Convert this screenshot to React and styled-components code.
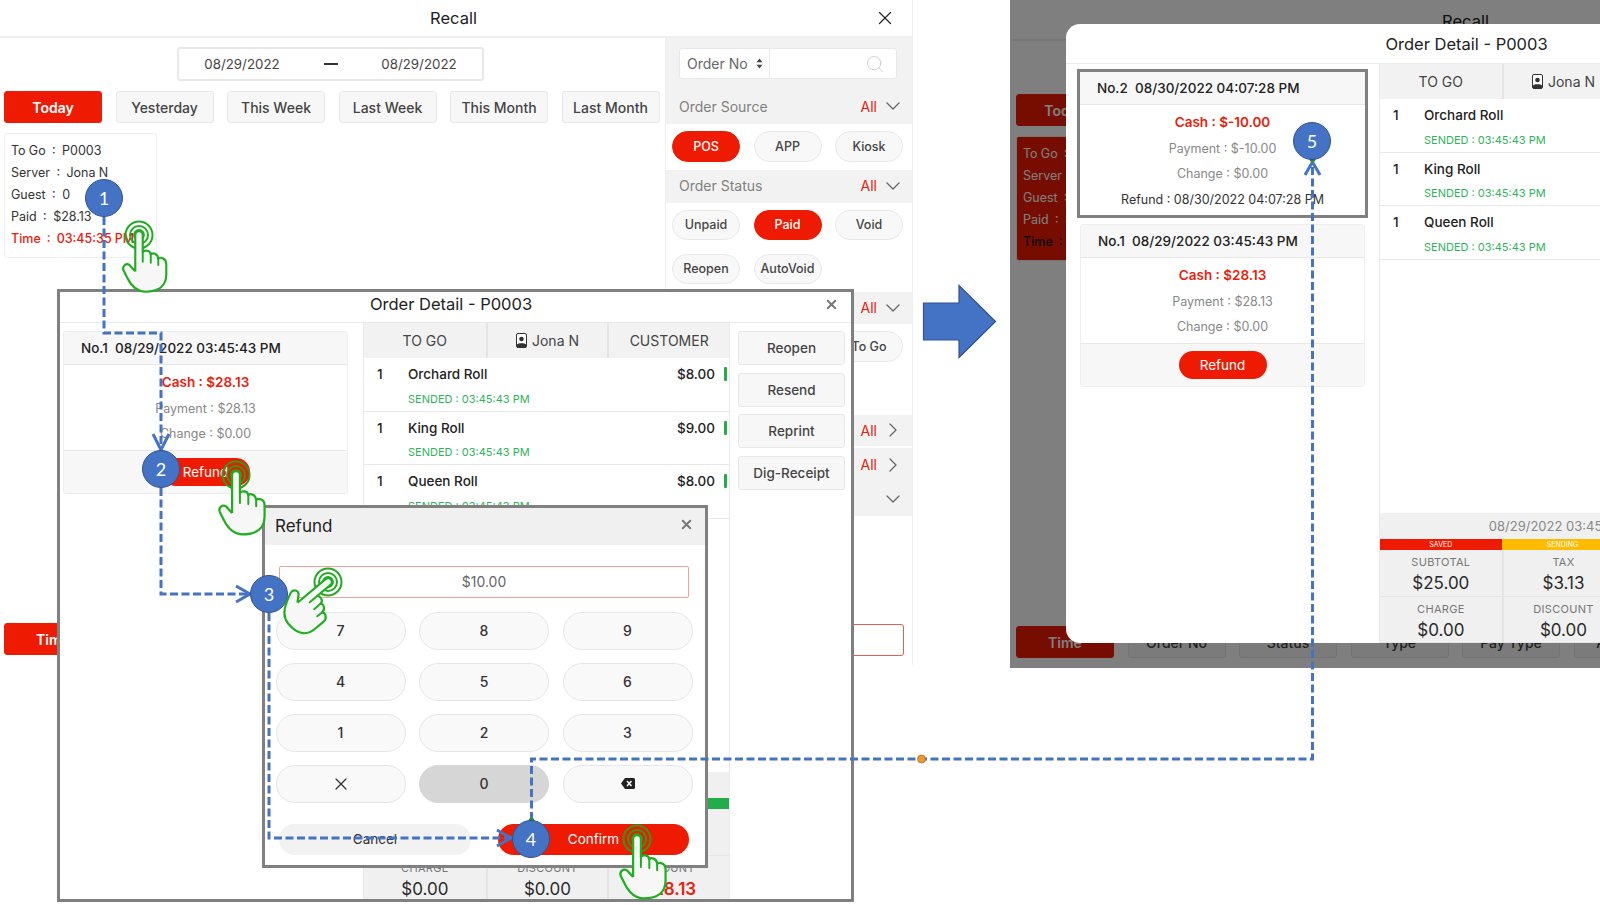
import React from 'react';
import styled, { createGlobalStyle } from 'styled-components';
import { ChevronDown, ChevronRight, Search, X } from 'lucide-react';

const RED = '#ee1b02';
const BLUE = '#4472c4';

const Global = createGlobalStyle`
  html, body { margin: 0; padding: 0; background: #fff; overflow: hidden; }
  * { box-sizing: border-box; }
  body { font-family: Inter, "Open Sans", "Liberation Sans", sans-serif; color: #333; }
`;

const Page = styled.div`
  position: relative;
  width: 1600px;
  height: 905px;
  overflow: hidden;
  background: #fff;
`;

/* ---------- Recall screen ---------- */
const RecallWrap = styled.div`
  width: 913px;
  height: 665px;
  display: flex;
  flex-direction: column;
  background: #fff;
  border-right: 1px solid #eee;
`;
const RecallHead = styled.header`
  flex: 0 0 38px;
  display: grid;
  grid-template-columns: 1fr auto 1fr;
  align-items: center;
  border-bottom: 2px solid #eee;
  padding: 0 16px 0 11px;
`;
const RecallTitle = styled.h1`
  grid-column: 2;
  margin: 0;
  font-size: 16.5px;
  font-weight: 400;
  color: #222;
`;
const RecallClose = styled.span`
  grid-column: 3;
  justify-self: end;
  display: flex;
  color: #222;
`;
const RecallBody = styled.div`
  flex: 1;
  display: grid;
  grid-template-columns: 665px 1fr;
  min-height: 0;
`;
const MainCol = styled.div`
  display: flex;
  flex-direction: column;
  padding: 9px 0 10px 4px;
`;
const DateBox = styled.div`
  align-self: center;
  margin-right: 8px;
  width: 307px;
  height: 34px;
  display: grid;
  grid-template-columns: 126px 51px 126px;
  align-items: center;
  justify-items: center;
  padding-bottom: 1px;
  border: 2px solid #e8e8e8;
  border-radius: 3px;
  font-size: 13.3px;
  color: #444;
`;
const DateDash = styled.span`
  width: 14px;
  height: 2px;
  background: #333;
`;
const RangeRow = styled.div`
  margin-top: 10px;
  display: flex;
  gap: 13.5px;
`;
const RangeBtn = styled.div`
  width: 98px;
  height: 32px;
  display: flex;
  align-items: center;
  justify-content: center;
  border-radius: 3px;
  font-size: 14px;
  font-weight: ${p => (p.$on ? 600 : 500)};
  color: ${p => (p.$on ? '#fff' : '#444')};
  background: ${p => (p.$on ? RED : '#f7f7f7')};
  border: 1px solid ${p => (p.$on ? RED : '#e8e8e8')};
`;
const OrderCard = styled.div`
  margin-top: 10px;
  width: 153px;
  height: 125px;
  padding: 6px 0 0 6px;
  border: 1px solid #eee;
  border-radius: 3px;
  font-size: 12.5px;
  line-height: 22px;
  word-spacing: -0.3px;
  white-space: nowrap;
  background: ${p => (p.$selected ? RED : '#fff')};
  color: ${p => (p.$selected ? '#fff' : '#333')};
`;
const CardTime = styled.div`
  color: ${p => (p.$selected ? '#111' : '#e8200c')};
  font-weight: 500;
`;
const BottomRow = styled(RangeRow)`
  margin-top: auto;
`;

const SideCol = styled.aside`
  border-left: 1px solid #eee;
  display: flex;
  flex-direction: column;
`;
const SearchBand = styled.div`
  height: 51px;
  padding: 10px 14px 0 13px;
  background: #f2f2f2;
`;
const SearchBox = styled.div`
  display: grid;
  grid-template-columns: 90px 1fr;
  height: 31px;
  width: 218px;
  background: #fff;
  border: 1px solid #e8e8e8;
  border-radius: 3px;
`;
const SelectCell = styled.div`
  display: flex;
  align-items: center;
  gap: 8px;
  padding-left: 7px;
  font-size: 14px;
  color: #666;
  border-right: 1px solid #e8e8e8;
`;
const SearchCell = styled.div`
  display: flex;
  align-items: center;
  justify-content: flex-end;
  padding-right: 11px;
  color: #ccc;
`;
const Band = styled.div`
  height: ${p => p.$h}px;
  display: flex;
  align-items: center;
  padding: 0 7px 1px 13px;
  background: #f2f2f2;
  font-size: 14px;
  color: #808080;
`;
const BandLabel = styled.span`
  flex: 1;
`;
const BandAll = styled.span`
  color: #e8200c;
  margin-right: 4px;
`;
const PillGrid = styled.div`
  display: grid;
  grid-template-columns: repeat(3, 68px);
  gap: 13.5px;
  padding: 7px 0 8px 6px;
  min-height: ${p => p.$min || 0}px;
`;
const Pill = styled.div`
  height: 30.5px;
  display: flex;
  align-items: center;
  justify-content: center;
  border-radius: 16px;
  font-size: 12.5px;
  font-weight: 500;
  color: ${p => (p.$on ? '#fff' : '#444')};
  background: ${p => (p.$on ? RED : '#f8f8f8')};
  border: 1px solid ${p => (p.$on ? RED : '#e8e8e8')};
`;
const SideInput = styled.div`
  margin: auto 8px 9px 8px;
  height: 32px;
  border: 1px solid #e8604c;
  border-radius: 3px;
`;
const BandGap = styled.div`
  height: 2px;
`;

const SortCaret = () => (
  <svg width="7" height="11" viewBox="0 0 7 11"><path d="M3.5 0.5L6.5 4.2H0.5Z M3.5 10.5L0.5 6.8H6.5Z" fill="#444" /></svg>
);

const FilterBand = ({ h, label, all = true, open = true }) => (
  <Band $h={h}>
    <BandLabel>{label}</BandLabel>
    {all && <BandAll>All</BandAll>}
    {open ? <ChevronDown size={24} strokeWidth={1.3} color="#666" /> : <ChevronRight size={24} strokeWidth={1.3} color="#666" />}
  </Band>
);

const RANGES = ['Yesterday', 'This Week', 'Last Week', 'This Month', 'Last Month'];
const SORTS = ['Order No', 'Status', 'Type', 'Pay Type', 'Amount'];

const RecallScreen = ({ selected }) => (
  <RecallWrap>
    <RecallHead>
      <RecallTitle>Recall</RecallTitle>
      <RecallClose><X size={22} strokeWidth={1.3} /></RecallClose>
    </RecallHead>
    <RecallBody>
      <MainCol>
        <DateBox><span>08/29/2022</span><DateDash /><span>08/29/2022</span></DateBox>
        <RangeRow>
          <RangeBtn $on>Today</RangeBtn>
          {RANGES.map(r => <RangeBtn key={r}>{r}</RangeBtn>)}
        </RangeRow>
        <OrderCard $selected={selected}>
          <div>To Go&nbsp; : &nbsp;P0003</div>
          <div>Server&nbsp; : &nbsp;Jona N</div>
          <div>Guest&nbsp; : &nbsp;0</div>
          <div>Paid&nbsp; : &nbsp;$28.13</div>
          <CardTime $selected={selected}>Time&nbsp; : &nbsp;03:45:35 PM</CardTime>
        </OrderCard>
        <BottomRow>
          <RangeBtn $on>Time</RangeBtn>
          {SORTS.map(r => <RangeBtn key={r}>{r}</RangeBtn>)}
        </BottomRow>
      </MainCol>
      <SideCol>
        <SearchBand>
          <SearchBox>
            <SelectCell>Order No <SortCaret /></SelectCell>
            <SearchCell><Search size={20} strokeWidth={1.1} /></SearchCell>
          </SearchBox>
        </SearchBand>
        <FilterBand h={35} label="Order Source" />
        <PillGrid>
          <Pill $on>POS</Pill><Pill>APP</Pill><Pill>Kiosk</Pill>
        </PillGrid>
        <FilterBand h={33} label="Order Status" />
        <PillGrid>
          <Pill>Unpaid</Pill><Pill $on>Paid</Pill><Pill>Void</Pill>
          <Pill>Reopen</Pill><Pill>AutoVoid</Pill>
        </PillGrid>
        <FilterBand h={32} label="Order Type" />
        <PillGrid $min={91}>
          <Pill>Dine In</Pill><Pill>Delivery</Pill><Pill>To Go</Pill>
        </PillGrid>
        <FilterBand h={31} label="Pay Type" open={false} />
        <BandGap />
        <FilterBand h={34} label="Server" open={false} />
        <FilterBand h={34} label="Amount" all={false} />
        <SideInput />
      </SideCol>
    </RecallBody>
  </RecallWrap>
);

/* ---------- Order detail ---------- */
const FramedDetail = styled.section`
  position: absolute;
  left: 57px;
  top: 289px;
  width: 797px;
  height: 613px;
  border: 3px solid #808080;
  background: #fff;
  display: flex;
  flex-direction: column;
  overflow: hidden;
`;
const ModalDetail = styled.section`
  position: absolute;
  left: 56px;
  top: 24px;
  width: 801px;
  height: 619px;
  border-radius: 14px 0 0 14px;
  background: #fff;
  display: flex;
  flex-direction: column;
  overflow: hidden;
`;
const DetailHead = styled.header`
  flex: 0 0 ${p => p.$h}px;
  display: grid;
  grid-template-columns: 1fr auto 1fr;
  align-items: center;
  border-bottom: 1px solid #eaeaea;
  padding: 0 ${p => p.$shift}px ${p => p.$lift}px 0;
`;
const DetailTitle = styled.h2`
  grid-column: 2;
  margin: 0;
  font-size: 16.5px;
  font-weight: 400;
  color: #222;
`;
const DetailClose = styled.span`
  grid-column: 3;
  justify-self: end;
  display: flex;
  margin-right: 3px;
  margin-top: 1px;
  color: #777;
`;
const DetailBody = styled.div`
  flex: 1;
  min-height: 0;
  display: grid;
  grid-template-columns: ${p => p.$left}px 366px 122px;
`;
const PayCol = styled.div`
  display: flex;
  flex-direction: column;
  gap: 9px;
  padding: 8px 0 0 ${p => p.$inset}px;
`;
const PayCard = styled.article`
  width: 285px;
  background: #fff;
  border-radius: ${p => (p.$marked ? 0 : 3)}px;
  outline: ${p => (p.$marked ? '3.5px solid #808080' : 'none')};
  border: ${p => (p.$marked ? '0' : '1px solid #eeeeee')};
`;
const PayHead = styled.div`
  height: 33px;
  display: flex;
  align-items: center;
  padding-left: 17px;
  background: #f7f7f7;
  border-bottom: 1px solid #e8e8e8;
  font-size: 13.5px;
  font-weight: 500;
  color: #222;
  white-space: pre;
`;
const PayLines = styled.div`
  padding: 5px 0 3px;
  text-align: center;
  line-height: 25.5px;
  font-size: 12.5px;
  white-space: nowrap;
  color: #888;
`;
const PayCash = styled.div`
  color: #e8200c;
  font-size: 13.5px;
  font-weight: 600;
`;
const PayRefund = styled.div`
  color: #333;
`;
const PayFoot = styled.div`
  height: 43px;
  display: flex;
  align-items: center;
  justify-content: center;
  background: #f7f7f7;
  border-top: 1px solid #e8e8e8;
`;
const RefundBtn = styled.div`
  width: 88px;
  height: 28px;
  display: flex;
  align-items: center;
  justify-content: center;
  border-radius: 14px;
  background: ${RED};
  color: #fff;
  font-size: 13.5px;
`;
const TicketCol = styled.div`
  display: flex;
  flex-direction: column;
  border-left: 1px solid #eaeaea;
  margin-bottom: -${p => p.$bleed}px;
  min-height: 0;
`;
const Tabs = styled.div`
  flex: 0 0 35px;
  display: grid;
  grid-template-columns: repeat(3, 1fr);
  background: #f2f2f2;
`;
const Tab = styled.div`
  display: flex;
  align-items: center;
  justify-content: center;
  gap: 5px;
  font-size: 14px;
  color: #444;
  & + & { border-left: 2px solid #e4e4e4; }
`;
const Items = styled.div`
  flex: 1;
  min-height: 0;
  overflow: hidden;
`;
const ItemRow = styled.div`
  height: 53.5px;
  display: grid;
  grid-template-columns: 31px 1fr auto 14px;
  grid-template-rows: 32.5px 1fr;
  padding-left: 13px;
  border-bottom: 1px solid #e8e8e8;
  align-items: center;
  font-size: 13.5px;
  font-weight: 500;
  color: #222;
`;
const Sended = styled.div`
  grid-column: 2 / 5;
  align-self: start;
  margin-top: 1px;
  font-size: 11px;
  font-weight: 400;
  color: #2fb35a;
`;
const ItemBar = styled.i`
  justify-self: end;
  margin-right: 2px;
  width: 3px;
  height: 14px;
  border-radius: 1px;
  background: #22ad4d;
`;
const Totals = styled.div`
  flex: 0 0 auto;
  background: #f0f0f0;
`;
const StampRow = styled.div`
  height: 26px;
  display: flex;
  align-items: center;
  justify-content: center;
  padding-left: 10px;
  font-size: 13px;
  color: #888;
`;
const StatusBar = styled.div`
  display: grid;
  grid-template-columns: repeat(3, 1fr);
  height: 11px;
`;
const StatusCell = styled.div`
  background: ${p => p.$c};
  color: #fff;
  font-size: 7px;
  line-height: 11px;
  text-align: center;
`;
const TotalGrid = styled.div`
  display: grid;
  grid-template-columns: repeat(3, 1fr);
  grid-auto-rows: 46.5px;
`;
const TotalCell = styled.div`
  display: flex;
  flex-direction: column;
  align-items: center;
  padding-top: 5px;
  border-bottom: 1px solid #e4e4e4;
  border-left: 2px solid #e4e4e4;
  &:nth-child(3n + 1) { border-left: 0; }
`;
const TotalLabel = styled.div`
  font-size: 11px;
  line-height: 14px;
  letter-spacing: 0.3px;
  color: #777;
`;
const TotalValue = styled.div`
  margin-top: 1px;
  font-size: 17px;
  line-height: 26px;
  font-weight: ${p => (p.$red ? 600 : 400)};
  color: ${p => (p.$red ? '#e8200c' : '#2a2a2a')};
`;
const ActionCol = styled.div`
  display: flex;
  flex-direction: column;
  gap: 7.5px;
  padding: 8px 6px 0 8px;
  border-left: 1px solid #eaeaea;
`;
const ActionBtn = styled.div`
  height: 34px;
  display: flex;
  align-items: center;
  justify-content: center;
  background: #f7f7f7;
  border: 1px solid #e8e8e8;
  border-radius: 3px;
  font-size: 13.5px;
  font-weight: 500;
  color: #444;
`;

const ContactIcon = () => (
  <svg width="11" height="15" viewBox="0 0 11 15">
    <rect x="0.5" y="0.5" width="10" height="14" rx="1.5" fill="#fff" stroke="#333" />
    <circle cx="5.5" cy="6" r="2.3" fill="#333" />
    <path d="M1 14.5V11.5C2 9.8 9 9.8 10 11.5V14.5Z" fill="#333" />
  </svg>
);

const ITEMS = [['Orchard Roll', '$8.00'], ['King Roll', '$9.00'], ['Queen Roll', '$8.00']];
const ACTIONS = ['Reopen', 'Resend', 'Reprint', 'Dig-Receipt'];

const Ticket = ({ bleed = 0 }) => (
  <TicketCol $bleed={bleed}>
    <Tabs>
      <Tab>TO GO</Tab>
      <Tab><ContactIcon />Jona N</Tab>
      <Tab>CUSTOMER</Tab>
    </Tabs>
    <Items>
      {ITEMS.map(([name, price]) => (
        <ItemRow key={name}>
          <span>1</span>
          <span>{name}</span>
          <span>{price}</span>
          <ItemBar />
          <Sended>SENDED : 03:45:43 PM</Sended>
        </ItemRow>
      ))}
    </Items>
    <Totals>
      <StampRow>08/29/2022 03:45:43 PM</StampRow>
      <StatusBar>
        <StatusCell $c={RED}>SAVED</StatusCell>
        <StatusCell $c="#ffbb00">SENDING</StatusCell>
        <StatusCell $c="#22ad4d">SENT</StatusCell>
      </StatusBar>
      <TotalGrid>
        <TotalCell><TotalLabel>SUBTOTAL</TotalLabel><TotalValue>$25.00</TotalValue></TotalCell>
        <TotalCell><TotalLabel>TAX</TotalLabel><TotalValue>$3.13</TotalValue></TotalCell>
        <TotalCell><TotalLabel>TIP</TotalLabel><TotalValue>$0.00</TotalValue></TotalCell>
        <TotalCell><TotalLabel>CHARGE</TotalLabel><TotalValue>$0.00</TotalValue></TotalCell>
        <TotalCell><TotalLabel>DISCOUNT</TotalLabel><TotalValue>$0.00</TotalValue></TotalCell>
        <TotalCell><TotalLabel>AMOUNT</TotalLabel><TotalValue $red>$28.13</TotalValue></TotalCell>
      </TotalGrid>
    </Totals>
  </TicketCol>
);

const Actions = () => (
  <ActionCol>{ACTIONS.map(a => <ActionBtn key={a}>{a}</ActionBtn>)}</ActionCol>
);

/* ---------- Refund dialog ---------- */
const RefundDialog = styled.section`
  position: absolute;
  left: 262px;
  top: 505px;
  width: 446px;
  height: 363px;
  border: 3px solid #808080;
  background: #fff;
  display: flex;
  flex-direction: column;
`;
const RefundHead = styled.header`
  flex: 0 0 37px;
  display: flex;
  align-items: center;
  justify-content: space-between;
  padding: 0 11px 2px 10px;
  background: #f0f0f0;
  font-size: 17px;
  color: #222;
`;
const RefundClose = styled.span`
  display: flex;
  color: #777;
  margin-top: -3px;
`;
const AmountField = styled.div`
  margin: 21px 0 0 14px;
  width: 410px;
  height: 32px;
  display: flex;
  align-items: center;
  justify-content: center;
  padding-bottom: 1px;
  border: 1px solid #f2a09a;
  border-radius: 2px;
  font-size: 14px;
  color: #666;
`;
const KeyGrid = styled.div`
  margin: 14px 0 0 10.5px;
  display: grid;
  grid-template-columns: repeat(3, 130px);
  grid-auto-rows: 37.5px;
  column-gap: 13.5px;
  row-gap: 13.5px;
`;
const Key = styled.div`
  display: flex;
  align-items: center;
  justify-content: center;
  border-radius: 19px;
  font-size: 14px;
  font-weight: 500;
  color: #333;
  background: ${p => (p.$down ? '#d6d6d6' : '#f9f9f9')};
  border: 1px solid ${p => (p.$down ? '#d6d6d6' : '#e6e6e6')};
`;
const DialogActions = styled.div`
  margin: 21px 0 0 14px;
  display: grid;
  grid-template-columns: 192px 191px;
  column-gap: 27px;
  height: 31px;
`;
const DialogBtn = styled.div`
  display: flex;
  align-items: center;
  justify-content: center;
  border-radius: 16px;
  font-size: 13.5px;
  color: ${p => (p.$main ? '#fff' : '#333')};
  background: ${p => (p.$main ? RED : '#f2f2f2')};
`;

const BackspaceIcon = () => (
  <svg width="14" height="11" viewBox="0 0 14 11">
    <path d="M4 0H12.5C13.3 0 14 .7 14 1.5V9.5C14 10.3 13.3 11 12.5 11H4L0 5.5Z" fill="#222" />
    <path d="M6 3L10.5 8M10.5 3L6 8" stroke="#fff" strokeWidth="1.5" />
  </svg>
);

/* ---------- Right frame ---------- */
const ResultFrame = styled.div`
  position: absolute;
  left: 1010px;
  top: 0;
  width: 590px;
  height: 668px;
  overflow: hidden;
  background: #fff;
  padding: 3px 0 0 2px;
`;
const Scrim = styled.div`
  position: absolute;
  inset: 0;
  background: rgba(0, 0, 0, 0.5);
`;

/* ---------- Annotations ---------- */
const Overlay = styled.svg`
  position: absolute;
  left: 0;
  top: 0;
  pointer-events: none;
`;
const Badge = styled.div`
  position: absolute;
  left: ${p => p.$x - 19}px;
  top: ${p => p.$y - 19}px;
  width: 38px;
  height: 38px;
  border-radius: 50%;
  background: ${BLUE};
  border: 1.5px solid #2f528f;
  display: flex;
  align-items: center;
  justify-content: center;
  font-family: Lato, "Open Sans", sans-serif;
  font-size: 18px;
  color: #fff;
`;
const HandSvg = styled.svg`
  position: absolute;
  left: ${p => p.$x - 60}px;
  top: ${p => p.$y - 30}px;
  pointer-events: none;
`;

const Hand = ({ x, y, rotate = 0, scale = 1, ring = '#22aa22' }) => (
  <HandSvg $x={x} $y={y} width="130" height="110" viewBox="-60 -30 130 110">
    <g fill="none" stroke={ring}>
      <circle r="13.5" strokeWidth="2" />
      <circle r="9" strokeWidth="2" />
      <circle r="5" strokeWidth="1.8" />
    </g>
    <g transform={`rotate(${rotate}) scale(${scale})`} fill="none">
      <path
        d="M-3.5 34V0A3.5 3.5 0 0 1 3.5 0V16C5 13.8 10.5 14 11 18C12.5 16.5 17.5 17 18 22C20 20.5 25.5 21.5 25.5 27V37C25.5 47 19 53 6 53C-3 53 -8 46 -11 40L-14.5 33C-16 29 -12 26 -9 28L-3.5 34"
        fill="#f7f7f7"
        stroke="#1fae1f"
        strokeWidth="2"
        strokeLinejoin="round"
      />
      <path d="M3.5 16V25M11 18V26M18 22V28" stroke="#1fae1f" strokeWidth="1.8" strokeLinecap="round" />
    </g>
  </HandSvg>
);

const Annotations = () => (
  <Overlay width="1600" height="905" viewBox="0 0 1600 905">
    <polygon points="923.5,303 959,303 959,285.5 995.5,321.5 959,357.5 959,340 923.5,340" fill={BLUE} stroke="#2f528f" strokeWidth="1.2" />
    <g fill="none" stroke={BLUE} strokeWidth="3" strokeDasharray="8 3.5">
      <path d="M104 217V333H161V448" />
      <path d="M161 488V594H249" />
      <path d="M269 613V838H510" />
      <path d="M531.5 820V759H1312.5V165" />
    </g>
    <g fill="none" stroke={BLUE} strokeWidth="3">
      <path d="M153 434L161 450L169 434" />
      <path d="M236 586L250 594L236 602" />
      <path d="M497 830L511 838L497 846" />
      <path d="M1305 175L1312.5 162L1320 175" />
    </g>
    <circle cx="921.5" cy="759" r="4" fill="#ed9a2c" stroke="#a8701f" strokeWidth="0.8" />
    <circle cx="531.5" cy="821" r="3" fill="#2a8a1a" />
    <circle cx="1312.5" cy="159" r="3" fill="#2a8a1a" />
  </Overlay>
);

const PayCards = {
  original: (
    <PayCard>
      <PayHead>{'No.1  08/29/2022 03:45:43 PM'}</PayHead>
      <PayLines>
        <PayCash>Cash : $28.13</PayCash>
        <div>Payment : $28.13</div>
        <div>Change : $0.00</div>
      </PayLines>
      <PayFoot><RefundBtn>Refund</RefundBtn></PayFoot>
    </PayCard>
  ),
  refund: (
    <PayCard $marked>
      <PayHead>{'No.2  08/30/2022 04:07:28 PM'}</PayHead>
      <PayLines>
        <PayCash>Cash : $-10.00</PayCash>
        <div>Payment : $-10.00</div>
        <div>Change : $0.00</div>
        <PayRefund>Refund : 08/30/2022 04:07:28 PM</PayRefund>
      </PayLines>
    </PayCard>
  ),
};

const KEYS = ['7', '8', '9', '4', '5', '6', '1', '2', '3'];

export default function App() {
  return (
    <Page>
      <Global />
      <RecallScreen />

      <ResultFrame>
        <RecallScreen selected />
        <Scrim />
        <ModalDetail>
          <DetailHead $h={40} $shift={0} $lift={0}>
            <DetailTitle>Order Detail - P0003</DetailTitle>
          </DetailHead>
          <DetailBody $left={313}>
            <PayCol $inset={14}>
              {PayCards.refund}
              {PayCards.original}
            </PayCol>
            <Ticket />
            <Actions />
          </DetailBody>
        </ModalDetail>
      </ResultFrame>

      <FramedDetail>
        <DetailHead $h={31} $shift={9} $lift={7}>
          <DetailTitle>Order Detail - P0003</DetailTitle>
          <DetailClose><X size={15} strokeWidth={3} /></DetailClose>
        </DetailHead>
        <DetailBody $left={303}>
          <PayCol $inset={3}>{PayCards.original}</PayCol>
          <Ticket bleed={3} />
          <Actions />
        </DetailBody>
      </FramedDetail>

      <RefundDialog>
        <RefundHead>
          <span>Refund</span>
          <RefundClose><X size={15} strokeWidth={3} /></RefundClose>
        </RefundHead>
        <AmountField>$10.00</AmountField>
        <KeyGrid>
          {KEYS.map(k => <Key key={k}>{k}</Key>)}
          <Key><X size={20} strokeWidth={1.5} /></Key>
          <Key $down>0</Key>
          <Key><BackspaceIcon /></Key>
        </KeyGrid>
        <DialogActions>
          <DialogBtn>Cancel</DialogBtn>
          <DialogBtn $main>Confirm</DialogBtn>
        </DialogActions>
      </RefundDialog>

      <Annotations />

      <Badge $x={104} $y={198}>1</Badge>
      <Badge $x={161} $y={469}>2</Badge>
      <Badge $x={269} $y={594}>3</Badge>
      <Badge $x={531} $y={839}>4</Badge>
      <Badge $x={1312} $y={141}>5</Badge>

      <Hand x={139} y={235} scale={1.07} />
      <Hand x={236} y={475} scale={1.12} ring="#2f9a1a" />
      <Hand x={328} y={582} rotate={50} scale={1.08} />
      <Hand x={637} y={839} scale={1.12} ring="#2f9a1a" />
    </Page>
  );
}
